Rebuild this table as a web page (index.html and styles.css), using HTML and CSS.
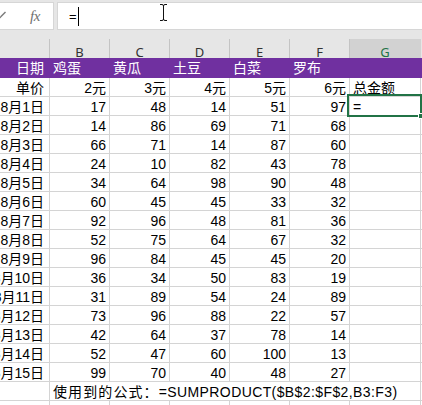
FILE: index.html
```html
<!DOCTYPE html>
<html lang="zh-CN">
<head>
<meta charset="utf-8">
<link rel="stylesheet" href="styles.css">
</head>
<body>
<div class="app">
  <div class="fbar">
    <div class="namebox">
      <svg class="check" width="8" height="26" viewBox="0 0 8 26"><path d="M-1 15.5 L5.5 9" stroke="#7a7a7a" stroke-width="1.5" fill="none"/></svg>
      <span class="fx"><i>f</i><i>x</i></span>
    </div>
    <div class="input"><span class="eq">=</span><span class="caret"></span></div>
  </div>
  <div class="colhead">
    <div class="ch"></div><div class="ch">B</div><div class="ch">C</div><div class="ch">D</div><div class="ch">E</div><div class="ch">F</div><div class="ch sel">G</div><div class="ch last"></div>
  </div>
  <div class="sheet">
    <div class="c a hd">日期</div><div class="c hd">鸡蛋</div><div class="c hd">黄瓜</div><div class="c hd">土豆</div><div class="c hd">白菜</div><div class="c hd">罗布</div><div class="c hd"></div><div class="c hd x"></div>
    <div class="c a">单价</div><div class="c r">2元</div><div class="c r">3元</div><div class="c r">4元</div><div class="c r">5元</div><div class="c r">6元</div><div class="c">总金额</div><div class="c x"></div>
    <div class="c a">8月1日</div><div class="c r">17</div><div class="c r">48</div><div class="c r">14</div><div class="c r">51</div><div class="c r">97</div><div class="c">=</div><div class="c x"></div>
    <div class="c a">8月2日</div><div class="c r">14</div><div class="c r">86</div><div class="c r">69</div><div class="c r">71</div><div class="c r">68</div><div class="c"></div><div class="c x"></div>
    <div class="c a">8月3日</div><div class="c r">66</div><div class="c r">71</div><div class="c r">14</div><div class="c r">87</div><div class="c r">60</div><div class="c"></div><div class="c x"></div>
    <div class="c a">8月4日</div><div class="c r">24</div><div class="c r">10</div><div class="c r">82</div><div class="c r">43</div><div class="c r">78</div><div class="c"></div><div class="c x"></div>
    <div class="c a">8月5日</div><div class="c r">34</div><div class="c r">64</div><div class="c r">98</div><div class="c r">90</div><div class="c r">48</div><div class="c"></div><div class="c x"></div>
    <div class="c a">8月6日</div><div class="c r">60</div><div class="c r">45</div><div class="c r">45</div><div class="c r">33</div><div class="c r">32</div><div class="c"></div><div class="c x"></div>
    <div class="c a">8月7日</div><div class="c r">92</div><div class="c r">96</div><div class="c r">48</div><div class="c r">81</div><div class="c r">36</div><div class="c"></div><div class="c x"></div>
    <div class="c a">8月8日</div><div class="c r">52</div><div class="c r">75</div><div class="c r">64</div><div class="c r">67</div><div class="c r">32</div><div class="c"></div><div class="c x"></div>
    <div class="c a">8月9日</div><div class="c r">96</div><div class="c r">84</div><div class="c r">45</div><div class="c r">45</div><div class="c r">20</div><div class="c"></div><div class="c x"></div>
    <div class="c a">8月10日</div><div class="c r">36</div><div class="c r">34</div><div class="c r">50</div><div class="c r">83</div><div class="c r">19</div><div class="c"></div><div class="c x"></div>
    <div class="c a">8月11日</div><div class="c r">31</div><div class="c r">89</div><div class="c r">54</div><div class="c r">24</div><div class="c r">89</div><div class="c"></div><div class="c x"></div>
    <div class="c a">8月12日</div><div class="c r">73</div><div class="c r">96</div><div class="c r">88</div><div class="c r">22</div><div class="c r">57</div><div class="c"></div><div class="c x"></div>
    <div class="c a">8月13日</div><div class="c r">42</div><div class="c r">64</div><div class="c r">37</div><div class="c r">78</div><div class="c r">14</div><div class="c"></div><div class="c x"></div>
    <div class="c a">8月14日</div><div class="c r">52</div><div class="c r">47</div><div class="c r">60</div><div class="c r">100</div><div class="c r">13</div><div class="c"></div><div class="c x"></div>
    <div class="c a">8月15日</div><div class="c r">99</div><div class="c r">70</div><div class="c r">40</div><div class="c r">48</div><div class="c r">27</div><div class="c"></div><div class="c x"></div>
    <div class="c"></div><div class="c span"><span class="cjk">使用到的公式：</span><span class="asc">=SUMPRODUCT($B$2:$F$2,B3:F3)</span></div><div class="c x"></div>
    <div class="c"></div><div class="c"></div><div class="c"></div><div class="c"></div><div class="c"></div><div class="c"></div><div class="c"></div><div class="c x"></div>
  </div>
  <div class="selbox"></div>
  <div class="handle"></div>
  <svg class="ibeam" width="8" height="18" viewBox="0 0 8 18"><path d="M0 0.5 H2 Q3.5 0.5 3.5 2 V15 Q3.5 16.5 2 16.5 H0 M7 0.5 H5 Q3.5 0.5 3.5 2 M3.5 15 Q3.5 16.5 5 16.5 H7" stroke="#111" stroke-width="1" fill="none"/></svg>
</div>
</body>
</html>
```
FILE: styles.css
```css
html, body {
  margin: 0;
  padding: 0;
  background: #ffffff;
  overflow: hidden;
}

.app {
  position: relative;
  width: 422px;
  height: 405px;
  overflow: hidden;
  font-family: "Liberation Sans", "Noto Sans CJK SC", sans-serif;
  font-size: 14px;
  color: #000;
}

.fbar {
  height: 39px;
  box-sizing: border-box;
  padding-top: 2px;
  background: #e6e6e6;
  display: flex;
  gap: 3px;
  align-items: flex-start;
}

.namebox {
  width: 54px;
  height: 28px;
  box-sizing: border-box;
  background: #fff;
  border: 1px solid #d6d6d6;
  border-left: none;
  display: flex;
  align-items: center;
}

.check {
  flex: none;
  align-self: flex-start;
}

.fx {
  margin-left: 22px;
  font-family: "Liberation Serif", serif;
  font-size: 15px;
  color: #707070;
  letter-spacing: -0.5px;
}

.input {
  flex: 1;
  height: 28px;
  box-sizing: border-box;
  background: #fff;
  border: 1px solid #d6d6d6;
  border-right: none;
  display: flex;
  align-items: center;
  padding-left: 11px;
}

.eq {
  font-size: 13px;
  line-height: 1;
}

.caret {
  width: 1px;
  height: 19px;
  background: #000;
  margin-left: 1px;
}

.colhead {
  display: grid;
  grid-template-columns: 50px 60px 60px 60px 60px 60px 71px 1fr;
  height: 19px;
  background: #e6e6e6;
}

.ch {
  box-sizing: border-box;
  border-right: 1px solid #c4c4c4;
  display: flex;
  justify-content: center;
  align-items: center;
  padding-top: 2px;
  font-family: "Noto Sans", "Liberation Sans", sans-serif;
  font-size: 13px;
  color: #333;
}

.ch.sel {
  background: #d2d2d2;
  color: #217346;
  border-right-color: #d2d2d2;
  border-bottom: 2px solid #217346;
  padding-top: 4px;
}

.ch.last {
  border-right: none;
}

.sheet {
  display: grid;
  grid-template-columns: 50px 60px 60px 60px 60px 60px 71px 1fr;
  grid-template-rows: 20px;
  grid-auto-rows: 19px;
}

.c {
  box-sizing: border-box;
  border-right: 1px solid #d4d4d4;
  border-bottom: 1px solid #d4d4d4;
  padding: 1px 3px 0;
  display: flex;
  align-items: center;
  white-space: nowrap;
  overflow: hidden;
  line-height: 18px;
}

.c.r {
  justify-content: flex-end;
}

.c.a {
  justify-content: flex-end;
  padding-right: 5px;
}

.c.x {
  border-right: none;
  padding: 0;
}

.c.hd {
  background: #7030a0;
  color: #fff;
  border-color: #7030a0;
}

.c.span {
  grid-column: span 6;
}

.cjk {
  letter-spacing: 1.1px;
}

.asc {
  letter-spacing: 0.4px;
}

.selbox {
  position: absolute;
  left: 347px;
  top: 94px;
  width: 75px;
  height: 23px;
  box-sizing: border-box;
  border: 2px solid #217346;
}

.handle {
  position: absolute;
  left: 418px;
  top: 113px;
  width: 6px;
  height: 6px;
  box-sizing: border-box;
  background: #217346;
  border: 1px solid #fff;
}

.ibeam {
  position: absolute;
  left: 160px;
  top: 4px;
}
```
